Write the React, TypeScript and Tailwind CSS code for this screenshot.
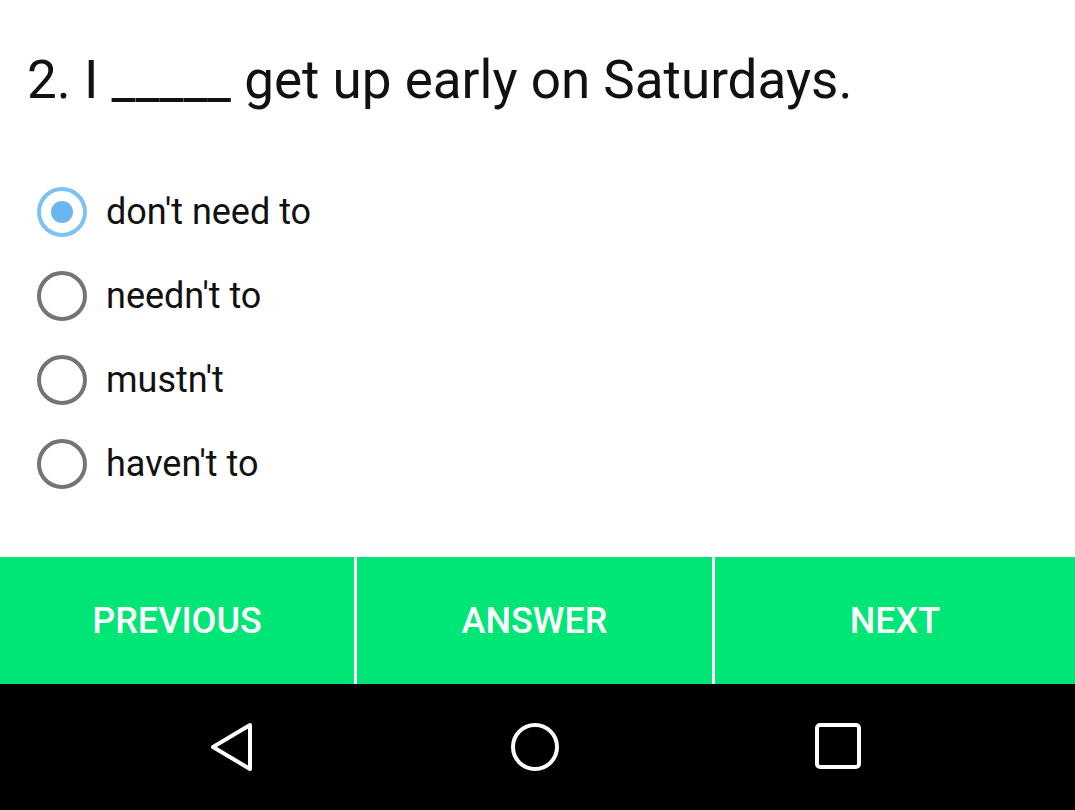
import React from "react";

const options = ["don't need to", "needn't to", "mustn't", "haven't to"];

function Radio({ checked }: { checked: boolean }) {
  if (checked) {
    return (
      <div className="w-[50px] h-[50px] shrink-0 rounded-full border-[4px] border-[#7cc2f2] flex items-center justify-center">
        <div className="w-[22px] h-[22px] rounded-full bg-[#6cb6ee]" />
      </div>
    );
  }
  return <div className="w-[50px] h-[50px] shrink-0 rounded-full border-[4px] border-[#747474]" />;
}

export default function App() {
  return (
    <div className="w-[1075px] h-[810px] bg-white flex flex-col" style={{ fontFamily: "Roboto, 'Noto Sans', sans-serif" }}>
      <div className="flex-1 flex flex-col">
        <div className="pl-[27px] pt-[46px] text-[53px] leading-[68px] text-[#111] whitespace-nowrap">
          2. I _____ get up early on Saturdays.
        </div>
        <div className="mt-[73px] flex flex-col gap-[34px] pl-[37px]">
          {options.map((o, i) => (
            <div key={o} className="flex items-center gap-[19px] h-[50px]">
              <Radio checked={i === 0} />
              <span className="text-[36px] text-[#111] leading-none">{o}</span>
            </div>
          ))}
        </div>
      </div>
      <div className="h-[127px] flex bg-white gap-[3px]">
        <div className="w-[354px] bg-[#00e676] flex items-center justify-center text-white text-[36px] font-medium">PREVIOUS</div>
        <div className="w-[355px] bg-[#00e676] flex items-center justify-center text-white text-[36px] font-medium">ANSWER</div>
        <div className="flex-1 bg-[#00e676] flex items-center justify-center text-white text-[36px] font-medium">NEXT</div>
      </div>
      <div className="h-[126px] bg-black flex items-center pl-[202px] gap-[243px]">
        <svg width="60" height="60" viewBox="0 0 60 60">
          <path d="M48 8 L48 52 L11 30 Z" fill="none" stroke="white" strokeWidth="4" strokeLinejoin="round" />
        </svg>
        <svg width="60" height="60" viewBox="0 0 60 60">
          <circle cx="30" cy="30" r="22" fill="none" stroke="white" strokeWidth="4" />
        </svg>
        <svg width="60" height="60" viewBox="0 0 60 60">
          <rect x="9" y="8" width="42" height="42" rx="3" fill="none" stroke="white" strokeWidth="4" />
        </svg>
      </div>
    </div>
  );
}
